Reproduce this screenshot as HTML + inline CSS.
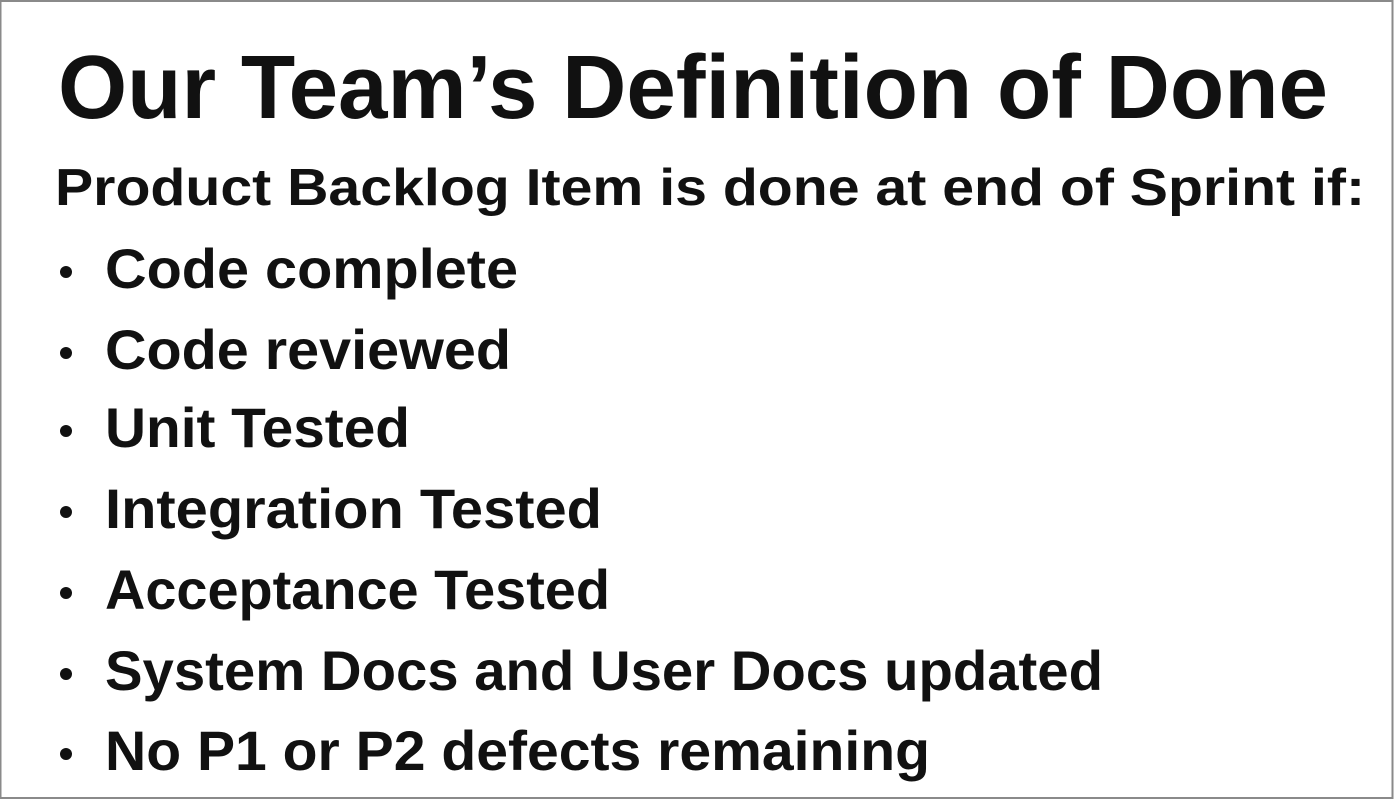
<!DOCTYPE html>
<html><head><meta charset="utf-8"><style>
html,body{margin:0;padding:0;background:#fff;}
svg{display:block}
</style></head><body>
<svg width="1395" height="801" xmlns="http://www.w3.org/2000/svg" font-family="Liberation Sans, sans-serif" font-weight="bold" fill="#111">
<rect x="0" y="0" width="1395" height="801" fill="#fff"/>
<rect x="0.5" y="1" width="1392" height="797" fill="none" stroke="#8a8a8a" stroke-width="2"/>
<text x="58" y="118" font-size="90" textLength="1270" lengthAdjust="spacingAndGlyphs">Our Team’s Definition of Done</text>
<text x="55" y="205" font-size="52" textLength="1310" lengthAdjust="spacingAndGlyphs">Product Backlog Item is done at end of Sprint if:</text>
<g font-size="56">
<circle cx="66" cy="272" r="6"/>
<text x="105" y="288" textLength="413" lengthAdjust="spacingAndGlyphs">Code complete</text>
<circle cx="66" cy="353" r="6"/>
<text x="105" y="369" textLength="406" lengthAdjust="spacingAndGlyphs">Code reviewed</text>
<circle cx="66" cy="431" r="6"/>
<text x="105" y="447" textLength="305" lengthAdjust="spacingAndGlyphs">Unit Tested</text>
<circle cx="66" cy="512" r="6"/>
<text x="105" y="528" textLength="497" lengthAdjust="spacingAndGlyphs">Integration Tested</text>
<circle cx="66" cy="593" r="6"/>
<text x="105" y="609" textLength="505" lengthAdjust="spacingAndGlyphs">Acceptance Tested</text>
<circle cx="66" cy="674" r="6"/>
<text x="105" y="690" textLength="998" lengthAdjust="spacingAndGlyphs">System Docs and User Docs updated</text>
<circle cx="66" cy="754" r="6"/>
<text x="105" y="770" textLength="825" lengthAdjust="spacingAndGlyphs">No P1 or P2 defects remaining</text>
</g>
</svg>
</body></html>
